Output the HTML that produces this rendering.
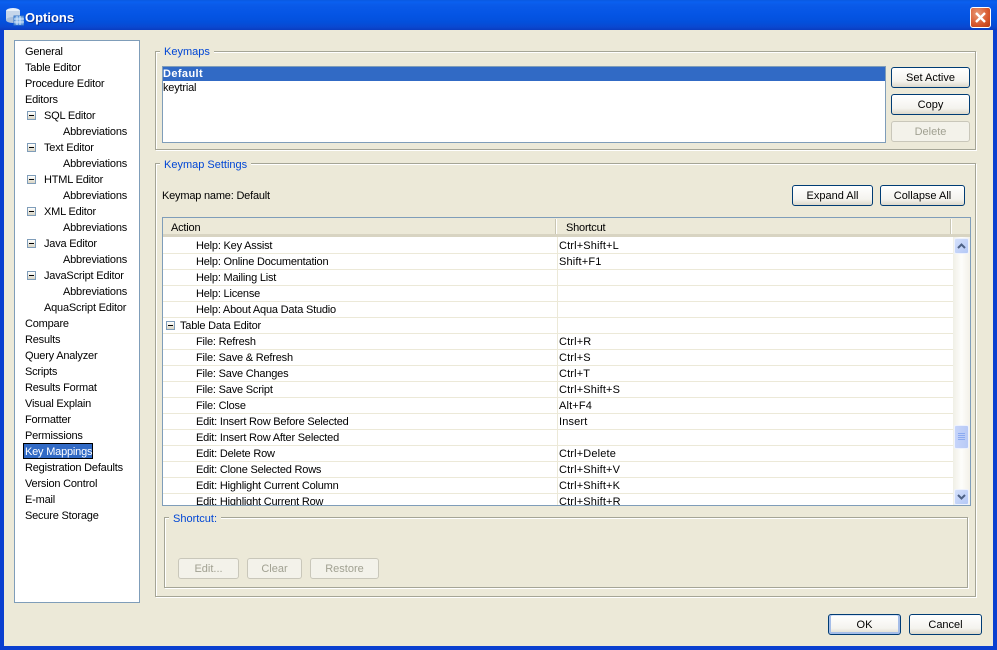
<!DOCTYPE html>
<html><head><meta charset="utf-8"><title>Options</title>
<style>
html,body{margin:0;padding:0;background:#0a3fd0}
#w{position:relative;width:997px;height:650px;overflow:hidden;background:#0a3fd0;font:11px "Liberation Sans",sans-serif;color:#000}
#w div,#w svg{position:absolute;box-sizing:border-box}
.t{white-space:nowrap;line-height:14px;height:14px;margin-top:1px;letter-spacing:-.2px}
.s{letter-spacing:.15px}
.tb{left:0;top:0;width:997px;height:30px;background:linear-gradient(#0a5ae0 0,#0a60f0 2px,#0a5ae8 5px,#0555e5 14px,#0350dc 22px,#0a48d0 27px,#0a3cc0 30px)}
.body{left:4px;top:30px;width:989px;height:616px;background:#ece9d8}
.gp{border:1px solid #a5a596;box-shadow:1px 1px 0 #fff,inset 1px 1px 0 #fff}
.lbl{color:#0046d5;background:#ece9d8;padding:0 4px;line-height:14px;height:14px;white-space:nowrap;margin-top:1px}
.btn{border:1px solid #003c74;border-radius:3px;background:linear-gradient(#fff,#f4f3ee 70%,#dcd8ca);text-align:center;line-height:21px;white-space:nowrap}
.dis{border-color:#c9c7ba;background:#f3f2ea;color:#a1a192}
.def{box-shadow:inset 0 -2px 0 #a5bde8,inset 2px 0 0 #a5bde8,inset -2px 0 0 #a5bde8,inset 0 1px 0 #d8e4f8}
.m{width:9px;height:9px;border:1px solid #7f9db9;background:linear-gradient(#fff,#d8d4c4)}
.m::after{content:"";position:absolute;left:1px;top:3px;width:5px;height:1px;background:#000}
.l{left:0;width:790px;height:1px;background:#ece9d8}
</style></head><body>
<div id="w">
<div class="tb"></div>
<svg style="left:5px;top:7px" width="19" height="19" viewBox="0 0 19 19">
<ellipse cx="8" cy="4" rx="7" ry="3" fill="#e8f0fa"/>
<rect x="1" y="4" width="14" height="9" fill="#c6d6ea"/>
<ellipse cx="8" cy="13" rx="7" ry="3" fill="#a9bfdc"/>
<rect x="9" y="9" width="10" height="9" fill="#7fb0e8" stroke="#3a78c8"/>
<path d="M9 12h10M9 15h10M12 9v9M15 9v9" stroke="#d6e8fa"/>
</svg>
<div class="t" style="left:25px;top:10px;color:#fff;font-weight:bold;font-size:13px;letter-spacing:0;text-shadow:1px 1px 0 #0a2c90">Options</div>
<div style="left:970px;top:7px;width:21px;height:21px;border:1px solid #fff;border-radius:3px;background:radial-gradient(circle at 35% 30%,#e89a78,#d8572c 60%,#b83a14)"></div>
<svg style="left:970px;top:7px" width="21" height="21"><path d="M6 6l9 9M15 6l-9 9" stroke="#fff" stroke-width="2.4"/></svg>
<div class="body"></div>

<!-- left tree -->
<div style="left:14px;top:40px;width:126px;height:563px;background:#fff;border:1px solid #7f9db9"></div>
<div class="t" style="left:25px;top:44px">General</div>
<div class="t" style="left:25px;top:60px">Table Editor</div>
<div class="t" style="left:25px;top:76px">Procedure Editor</div>
<div class="t" style="left:25px;top:92px">Editors</div>
<div class="m" style="left:27px;top:111px"></div><div class="t" style="left:44px;top:108px">SQL Editor</div>
<div class="t" style="left:63px;top:124px">Abbreviations</div>
<div class="m" style="left:27px;top:143px"></div><div class="t" style="left:44px;top:140px">Text Editor</div>
<div class="t" style="left:63px;top:156px">Abbreviations</div>
<div class="m" style="left:27px;top:175px"></div><div class="t" style="left:44px;top:172px">HTML Editor</div>
<div class="t" style="left:63px;top:188px">Abbreviations</div>
<div class="m" style="left:27px;top:207px"></div><div class="t" style="left:44px;top:204px">XML Editor</div>
<div class="t" style="left:63px;top:220px">Abbreviations</div>
<div class="m" style="left:27px;top:239px"></div><div class="t" style="left:44px;top:236px">Java Editor</div>
<div class="t" style="left:63px;top:252px">Abbreviations</div>
<div class="m" style="left:27px;top:271px"></div><div class="t" style="left:44px;top:268px">JavaScript Editor</div>
<div class="t" style="left:63px;top:284px">Abbreviations</div>
<div class="t" style="left:44px;top:300px">AquaScript Editor</div>
<div class="t" style="left:25px;top:316px">Compare</div>
<div class="t" style="left:25px;top:332px">Results</div>
<div class="t" style="left:25px;top:348px">Query Analyzer</div>
<div class="t" style="left:25px;top:364px">Scripts</div>
<div class="t" style="left:25px;top:380px">Results Format</div>
<div class="t" style="left:25px;top:396px">Visual Explain</div>
<div class="t" style="left:25px;top:412px">Formatter</div>
<div class="t" style="left:25px;top:428px">Permissions</div>
<div style="left:23px;top:443px;width:70px;height:16px;background:#316ac5;border:1px solid #000"></div>
<div class="t" style="left:25px;top:444px;color:#fff">Key Mappings</div>
<div class="t" style="left:25px;top:460px">Registration Defaults</div>
<div class="t" style="left:25px;top:476px">Version Control</div>
<div class="t" style="left:25px;top:492px">E-mail</div>
<div class="t" style="left:25px;top:508px">Secure Storage</div>

<!-- Keymaps -->
<div class="gp" style="left:155px;top:51px;width:821px;height:99px"></div>
<div class="lbl" style="left:160px;top:44px">Keymaps</div>
<div style="left:162px;top:66px;width:724px;height:77px;background:#fff;border:1px solid #7f9db9"></div>
<div style="left:163px;top:67px;width:722px;height:14px;background:#316ac5"></div>
<div class="t" style="left:163px;top:66px;color:#fff;font-weight:bold;letter-spacing:.4px">Default</div>
<div class="t" style="left:163px;top:80px">keytrial</div>
<div class="btn" style="left:891px;top:67px;width:79px;height:21px">Set Active</div>
<div class="btn" style="left:891px;top:94px;width:79px;height:21px">Copy</div>
<div class="btn dis" style="left:891px;top:121px;width:79px;height:21px">Delete</div>

<!-- Keymap Settings -->
<div class="gp" style="left:155px;top:163px;width:821px;height:434px"></div>
<div class="lbl" style="left:160px;top:157px">Keymap Settings</div>
<div class="t" style="left:162px;top:188px">Keymap name: Default</div>
<div class="btn" style="left:792px;top:185px;width:81px;height:21px">Expand All</div>
<div class="btn" style="left:880px;top:185px;width:85px;height:21px">Collapse All</div>

<!-- table -->
<div style="left:162px;top:217px;width:809px;height:289px;background:#fff;border:1px solid #7f9db9"></div>
<div style="left:163px;top:218px;width:807px;height:19px;background:#ece9d8;border-bottom:3px solid #d8d4c2"></div>
<div style="left:555px;top:219px;width:2px;height:15px;border-left:1px solid #c8c5b2;border-right:1px solid #fff"></div>
<div style="left:950px;top:219px;width:2px;height:15px;border-left:1px solid #c8c5b2;border-right:1px solid #fff"></div>
<div class="t" style="left:171px;top:220px">Action</div>
<div class="t" style="left:566px;top:220px">Shortcut</div>

<div style="left:163px;top:237px;width:790px;height:268px;overflow:hidden;background:#fff">
<div class="l" style="top:16px"></div>
<div class="l" style="top:32px"></div>
<div class="l" style="top:48px"></div>
<div class="l" style="top:64px"></div>
<div class="l" style="top:80px"></div>
<div class="l" style="top:96px"></div>
<div class="l" style="top:112px"></div>
<div class="l" style="top:128px"></div>
<div class="l" style="top:144px"></div>
<div class="l" style="top:160px"></div>
<div class="l" style="top:176px"></div>
<div class="l" style="top:192px"></div>
<div class="l" style="top:208px"></div>
<div class="l" style="top:224px"></div>
<div class="l" style="top:240px"></div>
<div class="l" style="top:256px"></div>
<div style="left:394px;top:0;width:1px;height:268px;background:#ece9d8"></div>

<div class="t" style="left:33px;top:1px">Help: Key Assist</div><div class="t s" style="left:396px;top:1px">Ctrl+Shift+L</div>
<div class="t" style="left:33px;top:17px">Help: Online Documentation</div><div class="t s" style="left:396px;top:17px">Shift+F1</div>
<div class="t" style="left:33px;top:33px">Help: Mailing List</div>
<div class="t" style="left:33px;top:49px">Help: License</div>
<div class="t" style="left:33px;top:65px">Help: About Aqua Data Studio</div>
<div class="m" style="left:3px;top:84px"></div><div class="t" style="left:17px;top:81px">Table Data Editor</div>
<div class="t" style="left:33px;top:97px">File: Refresh</div><div class="t s" style="left:396px;top:97px">Ctrl+R</div>
<div class="t" style="left:33px;top:113px">File: Save &amp; Refresh</div><div class="t s" style="left:396px;top:113px">Ctrl+S</div>
<div class="t" style="left:33px;top:129px">File: Save Changes</div><div class="t s" style="left:396px;top:129px">Ctrl+T</div>
<div class="t" style="left:33px;top:145px">File: Save Script</div><div class="t s" style="left:396px;top:145px">Ctrl+Shift+S</div>
<div class="t" style="left:33px;top:161px">File: Close</div><div class="t s" style="left:396px;top:161px">Alt+F4</div>
<div class="t" style="left:33px;top:177px">Edit: Insert Row Before Selected</div><div class="t s" style="left:396px;top:177px">Insert</div>
<div class="t" style="left:33px;top:193px">Edit: Insert Row After Selected</div>
<div class="t" style="left:33px;top:209px">Edit: Delete Row</div><div class="t s" style="left:396px;top:209px">Ctrl+Delete</div>
<div class="t" style="left:33px;top:225px">Edit: Clone Selected Rows</div><div class="t s" style="left:396px;top:225px">Ctrl+Shift+V</div>
<div class="t" style="left:33px;top:241px">Edit: Highlight Current Column</div><div class="t s" style="left:396px;top:241px">Ctrl+Shift+K</div>
<div class="t" style="left:33px;top:257px">Edit: Highlight Current Row</div><div class="t s" style="left:396px;top:257px">Ctrl+Shift+R</div>
</div>

<!-- scrollbar -->
<div style="left:953px;top:237px;width:17px;height:268px;background:linear-gradient(90deg,#f0efe6,#fdfdfb 50%,#f3f1e8)"></div>
<div style="left:954px;top:238px;width:15px;height:16px;background:linear-gradient(135deg,#d4e0fb,#b4c8f6);border:1px solid #eef2fd;border-radius:2px"></div>
<svg style="left:954px;top:238px" width="15" height="16"><path d="M4 10l3.500-3.500L11 10" fill="none" stroke="#4d6185" stroke-width="2"/></svg>
<div style="left:954px;top:425px;width:15px;height:24px;background:linear-gradient(90deg,#c6d4fa,#b8caf6);border:1px solid #eef2fd;border-radius:2px"></div>
<svg style="left:954px;top:425px" width="15" height="24"><path d="M4 8.500h7M4 10.500h7M4 12.500h7M4 14.500h7" stroke="#8cabf0"/></svg>
<div style="left:954px;top:489px;width:15px;height:16px;background:linear-gradient(135deg,#d4e0fb,#b4c8f6);border:1px solid #eef2fd;border-radius:2px"></div>
<svg style="left:954px;top:489px" width="15" height="16"><path d="M4 6l3.500 3.500L11 6" fill="none" stroke="#4d6185" stroke-width="2"/></svg>

<!-- Shortcut -->
<div class="gp" style="left:164px;top:517px;width:804px;height:71px"></div>
<div class="lbl" style="left:169px;top:511px">Shortcut:</div>
<div class="btn dis" style="left:178px;top:558px;width:61px;height:21px">Edit...</div>
<div class="btn dis" style="left:247px;top:558px;width:55px;height:21px">Clear</div>
<div class="btn dis" style="left:310px;top:558px;width:69px;height:21px">Restore</div>

<div class="btn def" style="left:828px;top:614px;width:73px;height:21px">OK</div>
<div class="btn" style="left:909px;top:614px;width:73px;height:21px">Cancel</div>
</div>
</body></html>
